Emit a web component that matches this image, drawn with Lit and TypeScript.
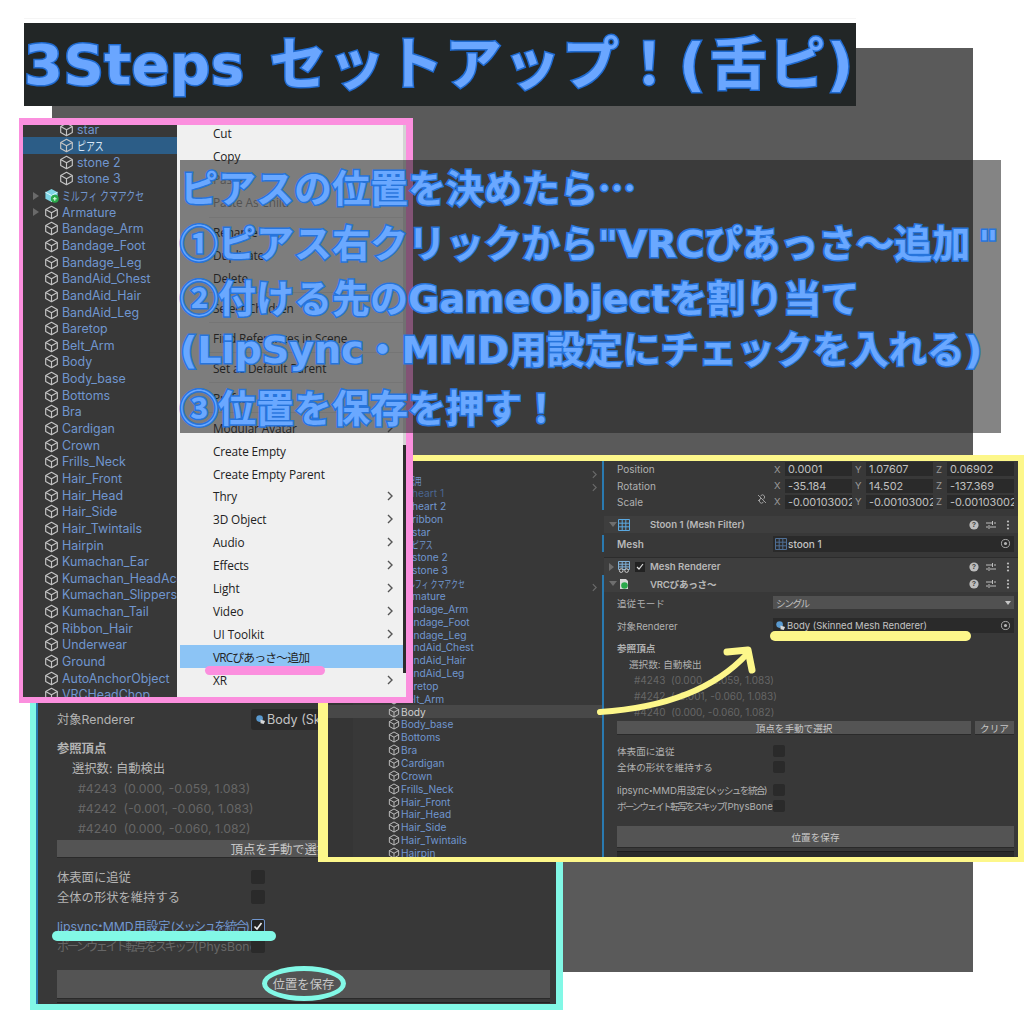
import { LitElement, html, css } from "lit";
import { customElement } from "lit/decorators.js";

type Row = { n: string; d?: number; kind?: string };

const common: Row[] = [
  { n: "Armature", kind: "fold" }, { n: "Bandage_Arm" }, { n: "Bandage_Foot" }, { n: "Bandage_Leg" },
  { n: "BandAid_Chest" }, { n: "BandAid_Hair" }, { n: "BandAid_Leg" }, { n: "Baretop" }, { n: "Belt_Arm" },
];
const afterBody: Row[] = [
  { n: "Body_base" }, { n: "Bottoms" }, { n: "Bra" }, { n: "Cardigan" }, { n: "Crown" }, { n: "Frills_Neck" },
  { n: "Hair_Front" }, { n: "Hair_Head" }, { n: "Hair_Side" }, { n: "Hair_Twintails" }, { n: "Hairpin" },
];
const pinkRows: Row[] = [
  { n: "star", d: 1 }, { n: "ピアス", d: 1, kind: "sel" }, { n: "stone 2", d: 1 }, { n: "stone 3", d: 1 },
  { n: "ミルフィ クマアクセ", kind: "prefab" },
  ...common, { n: "Body" }, ...afterBody,
  { n: "Kumachan_Ear" }, { n: "Kumachan_HeadAccessory" }, { n: "Kumachan_Slippers" }, { n: "Kumachan_Tail" },
  { n: "Ribbon_Hair" }, { n: "Underwear" }, { n: "Ground" }, { n: "AutoAnchorObject" }, { n: "VRCHeadChop" },
];
const yellowRows: Row[] = [
  { n: "確認用" }, { n: "heart 1", d: 1, kind: "dim" }, { n: "heart 2", d: 1 }, { n: "ribbon", d: 1 }, { n: "star", d: 1 },
  { n: "ピアス", d: 1 }, { n: "stone 2", d: 1 }, { n: "stone 3", d: 1 }, { n: "ミルフィ クマアクセ" },
  ...common, { n: "Body", kind: "hl" }, ...afterBody,
];
type Item = { t: string; k?: string };
const menu: Item[] = [
  { t: "Cut" }, { t: "Copy" }, { t: "Paste", k: "off" }, { t: "Paste As Child", k: "off" }, { t: "", k: "sep" },
  { t: "Rename" }, { t: "Duplicate" }, { t: "Delete" }, { t: "", k: "sep" },
  { t: "Select Children" }, { t: "", k: "sep" }, { t: "Find References in Scene" }, { t: "", k: "sep" },
  { t: "Set as Default Parent" }, { t: "", k: "sep" }, { t: "Prefab", k: "sub" }, { t: "", k: "sep" },
  { t: "Modular Avatar", k: "sub" }, { t: "Create Empty" }, { t: "Create Empty Parent" },
  { t: "Thry", k: "sub" }, { t: "3D Object", k: "sub" }, { t: "Audio", k: "sub" }, { t: "Effects", k: "sub" },
  { t: "Light", k: "sub" }, { t: "Video", k: "sub" }, { t: "UI Toolkit", k: "sub" },
  { t: "VRCぴあっさ～追加", k: "hl" }, { t: "XR", k: "sub" },
];

const cube = html`<svg class="ic" viewBox="0 0 16 16"><path d="M8 1.3 14.2 4.8v6.4L8 14.7 1.8 11.2V4.8zM1.8 4.8 8 8.3l6.2-3.5M8 8.3v6.4" fill="none" stroke="#c4c4c4" stroke-width="1.25" stroke-linejoin="round"/></svg>`;
const prefab = html`<svg class="ic" viewBox="0 0 16 16"><path d="M8 1 14.5 4.5v7L8 15 1.5 11.5v-7z" fill="#7fd6e6"/><path d="M1.5 4.5 8 8l6.5-3.5M8 8v7" fill="none" stroke="#e8fbff" stroke-width="1"/><circle cx="11.5" cy="11.5" r="4.2" fill="#2aa84a"/><path d="M9.5 11.5h4M11.5 9.5v4" stroke="#d6ffe0" stroke-width="1.2"/></svg>`;
const grid = (c = "#5aa8e0") => html`<svg class="cmp" viewBox="0 0 12 12"><path d="M.5.5h11v11H.5zM4.2.5v11M7.8.5v11M.5 4.2h11M.5 7.8h11" fill="none" stroke="${c}" stroke-width="1"/></svg>`;
const meshRendererIcon = html`<svg class="cmp" viewBox="0 0 12 12"><path d="M.5.5h11v8H.5zM4.2.5v8M7.8.5v8M.5 3.2h11M.5 5.9h11" fill="none" stroke="#7fb0d8" stroke-width="1"/><circle cx="3.2" cy="9.6" r="1.8" fill="#383838" stroke="#d0d0d0"/><circle cx="8.6" cy="9.6" r="1.8" fill="#383838" stroke="#d0d0d0"/></svg>`;
const headerIcons = html`<span class="hicons">
  <svg viewBox="0 0 12 12"><circle cx="6" cy="6" r="4.6" fill="#bdbdbd"/><text x="6" y="8.4" font-size="7" font-weight="700" text-anchor="middle" fill="#383838" font-family="Liberation Sans">?</text></svg>
  <svg viewBox="0 0 12 12"><path d="M1 4h6M9 4h2M1 8h2M5 8h6M7.5 2v4M4 6v4" stroke="#bdbdbd" stroke-width="1" fill="none"/></svg>
  <svg viewBox="0 0 12 12"><circle cx="6" cy="2.5" r="1.1" fill="#bdbdbd"/><circle cx="6" cy="6" r="1.1" fill="#bdbdbd"/><circle cx="6" cy="9.5" r="1.1" fill="#bdbdbd"/></svg>
</span>`;
const target = html`<svg class="tgt" viewBox="0 0 12 12"><circle cx="6" cy="6" r="4.4" fill="none" stroke="#b5b5b5" stroke-width="1"/><circle cx="6" cy="6" r="1.7" fill="#b5b5b5"/></svg>`;
const meshIc = html`<svg class="mini" viewBox="0 0 12 12"><circle cx="5" cy="5" r="3.6" fill="#5a9ad0"/><path d="M6 6l5 1.5-1.5 3.5-3.5-1z" fill="#d8d8d8"/></svg>`;
const lipsync = html`lipsync<span class="dot">・</span>MMD用設定<span class="nar">(メッシュを統合)</span>`;
const bone = html`<span class="nar2">ボーンウェイト転写をスキップ</span>(PhysBone`;

@customElement("app-root")
export class AppRoot extends LitElement {
  static styles = css`
    :host { display: block; width: 1024px; height: 1024px; background: #fff; position: relative; overflow: hidden;
      font-family: Inter, "Noto Sans CJK JP", sans-serif; }
    .win { position: absolute; box-sizing: border-box; overflow: hidden; }
    .gray { left: 52px; top: 48px; width: 921px; height: 924px; background: #5a5a5a; }
    .faint { position: absolute; left: 24px; top: 18px; width: 832px; height: 1px; background: #f5f5f5; }

    .title { left: 24px; top: 23px; width: 832px; height: 83px; background: #222626; display: flex; align-items: center;
      font: 700 57px/83px "DejaVu Sans", "Noto Sans CJK JP", sans-serif; color: #6aa6ff; letter-spacing: 1.5px;
      -webkit-text-stroke: 3px #1f6ad0; paint-order: stroke fill; white-space: pre; }
    .title .lat { font-size: 56px; letter-spacing: .5px; padding-right: 5px; }
    .title .par { letter-spacing: 5px; }
    .overlay { left: 180px; top: 160px; width: 821px; height: 273px; background: rgba(36,36,36,.56);
      display: flex; flex-direction: column;
      font: 700 38px/55px "DejaVu Sans", "Noto Sans CJK JP", sans-serif; color: #6aa8ff;
      -webkit-text-stroke: 3px #2674dc; paint-order: stroke fill; white-space: nowrap; overflow: visible; }
    .overlay div { height: 55px; flex: none; }
    .overlay div:first-child { margin-top: -2px; }
    .overlay .j { font-family: "Noto Sans CJK JP", sans-serif; }
    .overlay .q { margin-left: 8px; }

    .pink { left: 19px; top: 118px; width: 394px; height: 585px; border: solid #fb8fde; border-width: 7px 7px 6px 4px;
      background: #383838; display: flex; }
    .tree { width: 154px; flex: none; overflow: hidden; background: #383838; }
    .tree .rows { margin-top: -4.3px; }
    .row { height: 16.65px; display: flex; align-items: center; gap: 3px; padding-left: 21px; color: #7096cf;
      font-size: 12.4px; white-space: nowrap; position: relative; }
    .row.d1 { padding-left: 36px; }
    .row .ic { width: 15px; height: 15px; flex: none; }
    .row .cjk { display: inline-block; transform: scaleX(.72); transform-origin: left center; }
    .row.sel { background: #2c5d87; color: #d9e6f5; }
    .row.dim { color: #4a6590; }
    .row.hl { background: #484848; color: #cfcfcf; }
    .tri { position: absolute; width: 0; height: 0; left: 10px; border-left: 6px solid #6a6a6a;
      border-top: 4px solid transparent; border-bottom: 4px solid transparent; }
    .menu { flex: 1; background: #f0f0f0; overflow: hidden; position: relative; font: 11.8px "Open Sans", "Noto Sans CJK JP", sans-serif; letter-spacing: -.1px; color: #222; }
    .menu .list { margin-top: -3px; }
    .mi { height: 22.9px; display: flex; align-items: center; justify-content: space-between; padding: 0 13px 0 36px; }
    .mi.off { color: #8f8f8f; }
    .mi.hl { background: #8cc4f5; margin: 0 3px; padding: 0 10px 0 33px; letter-spacing: -.8px; }
    .mi svg { width: 6px; height: 10px; }
    .sep { height: 7.1px; display: flex; align-items: center; padding: 0 2px 0 32px; }
    .sep i { display: block; height: 1px; flex: 1; background: #dcdcdc; }
    .edge { position: absolute; right: 0; top: 320px; bottom: 24px; width: 3px; background: #2c2c2c; }
    .edge.l { top: 0; bottom: auto; height: 320px; background: #d4d4d4; }
    .mark { position: absolute; border-radius: 6px; }
    .mark.p { left: 205px; top: 666px; width: 120px; height: 9px; background: #fb8fde; }
    .mark.y { left: 770px; top: 631px; width: 201px; height: 10px; background: #fdf78a; }
    .mark.c { left: 52px; top: 931px; width: 224px; height: 10px; background: #82f8e6; }
    .ell { position: absolute; left: 262px; top: 966px; width: 84px; height: 35px; border: 5px solid #82f8e6; border-radius: 50%; box-sizing: border-box; }

    .yellow { left: 318px; top: 455px; width: 706px; height: 407px; border: solid #fdf78a; border-width: 6px 6px 5px 10px;
      background: #383838; display: flex; }
    .ytree { width: 274px; flex: none; overflow: hidden; padding-top: 13px; position: relative;
      background: linear-gradient(90deg, #353535 25px, #383838 25px); }
    .ytree .row { height: 12.85px; font-size: 10.2px; padding-left: 60px; gap: 1px; }
    .ytree .row.d1 { padding-left: 71px; }
    .ytree .row .ic { width: 12px; height: 12px; }
    .ytree .row .tri { display: none; }
    .ytree .row .cjk { transform: scaleX(.68); }
    .chev { position: absolute; left: 264px; width: 5px; height: 9px; }
    .insp { flex: 1; font-size: 9.6px; color: #b0b0b0; display: flex; flex-direction: column; white-space: nowrap; }
    .sect { border-left: 2px solid #2a7ab0; padding: 0 4px 0 13px; box-sizing: border-box; }
    .xf { height: 16.4px; display: flex; align-items: center; }
    .xf .lb { width: 157px; flex: none; position: relative; font-size: 10px; }
    .xf .lb svg { position: absolute; right: 6px; top: -3px; width: 12px; height: 12px; }
    .axes { display: grid; grid-template-columns: repeat(3, 78px); column-gap: 3px; }
    .ax { display: flex; align-items: center; gap: 3px; color: #9a9a9a; min-width: 0; }
    .ax b { font-weight: 400; width: 8px; flex: none; }
    .ax span { flex: 1; min-width: 0; overflow: hidden; background: #2a2a2a; color: #c0c0c0; height: 14px; line-height: 14px; padding-left: 3px; font-size: 10.9px; }
    .hd { height: 17px; background: #3e3e3e; display: flex; align-items: center; position: relative; margin-left: 2px;
      padding-left: 14px; padding-right: 4px; font-weight: 600; font-size: 9.6px; color: #b8b8b8; }
    .hd.topline { border-top: 1px solid #2c2c2c; }
    .hd.in { margin: 0 -4px 0 -13px; }
    .hd .ar { position: absolute; left: 5px; width: 0; height: 0; border-left: 4px solid transparent; border-right: 4px solid transparent; border-top: 5px solid #6e6e6e; }
    .hd .ar.r { border: 0; border-left: 5px solid #6e6e6e; border-top: 4px solid transparent; border-bottom: 4px solid transparent; }
    .cmp { width: 12px; height: 12px; flex: none; }
    .hd .tx { margin-left: 20px; flex: 1; }
    .hd .tx.nj { letter-spacing: -.25px; }
    .hd .cbx { width: 10px; height: 10px; background: #222; margin-left: 5px; margin-right: -15px; flex: none; display: grid; place-items: center; }
    .hd .cbx svg { width: 8px; height: 8px; }
    .hicons { display: flex; gap: 5px; }
    .hicons svg { width: 12px; height: 12px; }
    .mrow { height: 17px; display: flex; align-items: center; font-weight: 600; color: #b8b8b8; font-size: 10px; margin-top: 2px; }
    .mrow .lb, .lbl { width: 156px; flex: none; }
    .fld { flex: 1; height: 16px; background: #2a2a2a; display: flex; align-items: center; gap: 1px; padding: 0 3px 0 2px; color: #c4c4c4; font-weight: 400; font-size: 9.5px; overflow: hidden; white-space: nowrap; min-width: 0; }
    .fld .grow { flex: 1; overflow: hidden; }
    .fld .wgt { font-weight: 500; font-size: 10px; }
    .tgt { width: 11px; height: 11px; flex: none; }
    .mini { width: 11px; height: 11px; flex: none; }
    .line { display: flex; align-items: center; }
    .dd { flex: 1; height: 13px; background: #515151; color: #c0c0c0; display: flex; align-items: center; justify-content: space-between; padding: 0 3px; letter-spacing: -1.4px; }
    .dd i { width: 0; height: 0; border-left: 3px solid transparent; border-right: 3px solid transparent; border-top: 4px solid #c8c8c8; }
    .btnrow { display: flex; gap: 4px; }
    .btn { background: #545454; color: #c8c8c8; display: grid; place-items: center; border-bottom: 1px solid #2a2a2a; box-sizing: border-box; }
    .btn.grow { flex: 1; }
    .btn.w39 { width: 39px; }
    .btn.cbtn { width: 446px; }
    .cb { width: 12px; height: 12px; border-radius: 2px; background: #2a2a2a; flex: none; }
    .bold { font-weight: 700; }
    .dimt { color: #666; }
    .vrc { flex: 1; display: flex; flex-direction: column; }
    .rest { flex: 1; background: #2a2a2a; margin-top: 3px; border-top: 1px solid #1e1e1e; }
    .nar { letter-spacing: -.16em; }
    .nar2 { letter-spacing: -.2em; }
    .dot { margin: 0 -.32em; }
    .h13 { height: 13px; } .h14 { height: 14px; } .h15 { height: 15px; } .h16 { height: 16px; }
    .fld.h15 { height: 15px; }
    .h18 { height: 18px; } .h22 { height: 22px; } .h29 { height: 29px; }
    .mt1 { margin-top: 1px; } .mt2 { margin-top: 2px; } .mt4 { margin-top: 4px; } .mt5 { margin-top: 5px; }
    .mt6 { margin-top: 6px; } .mt7 { margin-top: 7px; } .mt8 { margin-top: 8px; } .mt9 { margin-top: 9px; }
    .mt10 { margin-top: 10px; } .mt12 { margin-top: 12px; } .mt14 { margin-top: 14px; }
    .pl12 { padding-left: 12px; } .pl15 { padding-left: 15px; } .pl17 { padding-left: 17px; font-size: 10px; } .pl21 { padding-left: 21px; }
    .clip { overflow: hidden; }

    .cyan { left: 30px; top: 700px; width: 533px; height: 310px; border: solid #82f8e6; border-width: 0 7px 6px 6px;
      background: #383838; }
    .cin { height: 100%; border-left: 2px solid #2a7ab0; padding: 9px 6px 0 19px; box-sizing: border-box; display: flex; flex-direction: column;
      color: #b4b4b4; font-size: 12.3px; white-space: nowrap; }
    .cin .line { height: 20px; }
    .cin .lbl { width: 194px; }
    .cin .fld { height: 21px; font-size: 12.6px; border-radius: 3px; gap: 1px; padding-left: 4px; }
    .cin .cb { width: 14px; height: 14px; }
    .cin .blue { color: #7096cf; }
    .cin .cb.on { background: #222; border: 1px solid #7096cf; box-sizing: border-box; display: grid; place-items: center; }
    .cb.on svg { width: 10px; height: 10px; }
    .sepline { height: 1px; background: #222; margin-top: 3px; }
    .arrow { position: absolute; left: 0; top: 0; width: 1024px; height: 1024px; pointer-events: none; }
  `;

  rows(list: Row[]) {
    return list.map((r) => html`<div class="row ${r.d ? "d1" : ""} ${r.kind ?? ""}">
      ${r.kind === "fold" || r.kind === "prefab" ? html`<span class="tri"></span>` : ""}
      ${r.kind === "prefab" ? prefab : cube}<span class="${/[^\x00-\x7f]/.test(r.n) ? "cjk" : ""}">${r.n}</span></div>`);
  }
  chev(c: string, cls = "") {
    return html`<svg class="${cls}" viewBox="0 0 6 10"><path d="M1 1l4 4-4 4" fill="none" stroke="${c}" stroke-width="1.4"/></svg>`;
  }
  xf(label: string, v: string[], link = false) {
    return html`<div class="xf"><span class="lb">${label}${link ? html`<svg viewBox="0 0 12 12"><path d="M2 8l3-3M4 3.5l1-1a2 2 0 0 1 3 3l-1 1M8 8.5l-1 1a2 2 0 0 1-3-3l1-1M2 2l8 8" stroke="#9c9c9c" fill="none"/></svg>` : ""}</span>
      <div class="axes">${["X", "Y", "Z"].map((a, i) => html`<div class="ax"><b>${a}</b><span>${v[i]}</span></div>`)}</div></div>`;
  }

  render() {
    return html`
      <div class="faint"></div>
      <div class="win gray"></div>

      <div class="win cyan"><div class="cin">
        <div class="line"><span class="lbl">対象Renderer</span><span class="fld">${meshIc}Body (Skinned Mesh Renderer)</span></div>
        <div class="line bold mt9">参照頂点</div>
        <div class="line pl15">選択数: 自動検出</div>
        <div class="line dimt pl21">#4243&nbsp;&nbsp;(0.000, -0.059, 1.083)</div>
        <div class="line dimt pl21">#4242&nbsp;&nbsp;(-0.001, -0.060, 1.083)</div>
        <div class="line dimt pl21">#4240&nbsp;&nbsp;(0.000, -0.060, 1.082)</div>
        <div class="btn cbtn h18 mt2">頂点を手動で選択</div>
        <div class="line mt9"><span class="lbl">体表面に追従</span><span class="cb"></span></div>
        <div class="line"><span class="lbl">全体の形状を維持する</span><span class="cb"></span></div>
        <div class="line blue mt9"><span class="lbl">${lipsync}</span><span class="cb on"><svg viewBox="0 0 10 10"><path d="M1.5 5.5 4 8l4.5-6" fill="none" stroke="#eee" stroke-width="1.6"/></svg></span></div>
        <div class="line dimt"><span class="lbl">${bone}</span><span class="cb"></span></div>
        <div class="btn h29 mt14">位置を保存</div>
        <div class="sepline"></div>
      </div></div>
      <div class="mark c"></div>
      <div class="ell"></div>

      <div class="win yellow">
        <div class="ytree">
          ${[9, 22, 122].map((t) => html`<span style="position:absolute;top:${t}px">${this.chev("#6a6a6a", "chev")}</span>`)}
          ${this.rows(yellowRows)}
        </div>
        <div class="insp">
          <div class="sect">
            ${this.xf("Position", ["0.0001", "1.07607", "0.06902"])}
            ${this.xf("Rotation", ["-35.184", "14.502", "-137.369"])}
            ${this.xf("Scale", ["-0.00103002", "-0.00103002", "-0.00103002"], true)}
          </div>
          <div class="hd mt6"><span class="ar"></span>${grid()}<span class="tx">Stoon 1 (Mesh Filter)</span>${headerIcons}</div>
          <div class="sect mrow"><span class="lb">Mesh</span><span class="fld">${grid("#4f6f96")}<span class="grow wgt">stoon 1</span>${target}</span></div>
          <div class="hd mt5 topline"><span class="ar r"></span>${meshRendererIcon}<span class="cbx"><svg viewBox="0 0 8 8"><path d="M1 4l2 2 4-5" fill="none" stroke="#ddd" stroke-width="1.2"/></svg></span><span class="tx">Mesh Renderer</span>${headerIcons}</div>
          <div class="sect vrc">
            <div class="hd in"><span class="ar"></span><svg class="cmp" viewBox="0 0 12 12"><path d="M2 1h6l2 2v8H2z" fill="#d8d8d8"/><circle cx="6.5" cy="7.5" r="3.3" fill="#2aa84a"/></svg><span class="tx nj">VRCぴあっさ～</span>${headerIcons}</div>
            <div class="line h13 mt4"><span class="lbl">追従モード</span><span class="dd">シングル<i></i></span></div>
            <div class="line h15 mt9"><span class="lbl">対象Renderer</span><span class="fld h15">${meshIc}<span class="grow">Body (Skinned Mesh Renderer)</span>${target}</span></div>
            <div class="line bold h16 mt7">参照頂点</div>
            <div class="line h16 pl12">選択数: 自動検出</div>
            <div class="line dimt h16 pl17">#4243&nbsp;&nbsp;(0.000, -0.059, 1.083)</div>
            <div class="line dimt h16 pl17">#4242&nbsp;&nbsp;(-0.001, -0.060, 1.083)</div>
            <div class="line dimt h16 pl17">#4240&nbsp;&nbsp;(0.000, -0.060, 1.082)</div>
            <div class="btnrow h14 mt1"><div class="btn grow">頂点を手動で選択</div><div class="btn w39">クリア</div></div>
            <div class="line h16 mt8"><span class="lbl">体表面に追従</span><span class="cb"></span></div>
            <div class="line h16"><span class="lbl">全体の形状を維持する</span><span class="cb"></span></div>
            <div class="line h16 mt7"><span class="lbl">${lipsync}</span><span class="cb"></span></div>
            <div class="line h16"><span class="lbl clip">${bone}</span><span class="cb"></span></div>
            <div class="btn h22 mt12">位置を保存</div>
            <div class="rest"></div>
          </div>
        </div>
      </div>

      <div class="win pink">
        <div class="tree"><div class="rows">${this.rows(pinkRows)}</div></div>
        <div class="menu">
          <div class="list">
            ${menu.map((m) => m.k === "sep"
              ? html`<div class="sep"><i></i></div>`
              : html`<div class="mi ${m.k ?? ""}"><span>${m.t}</span>${m.k === "sub" ? this.chev("#555") : ""}</div>`)}
          </div>
          <div class="edge l"></div><div class="edge"></div>
        </div>
      </div>
      <div class="mark p"></div>
      <div class="mark y"></div>

      <svg class="arrow" viewBox="0 0 1024 1024">
        <path d="M600 712 C 660 708 712 692 747 654" fill="none" stroke="#fdf78a" stroke-width="6" stroke-linecap="round"/>
        <path d="M727 652 L748 650 L752 670" fill="none" stroke="#fdf78a" stroke-width="7" stroke-linecap="round" stroke-linejoin="round"/>
      </svg>

      <div class="win overlay">
        <div>ピアスの位置を決めたら<span class="j">…</span></div>
        <div><span class="j">①</span>ピアス右クリックから"VRCぴあっさ～追加<span class="q">"</span></div>
        <div><span class="j">②</span>付ける先のGameObjectを割り当て</div>
        <div>(LipSync・MMD用設定にチェックを入れる)</div>
        <div><span class="j">③</span>位置を保存を押す！</div>
      </div>
      <div class="win title"><span class="lat">3Steps </span>セットアップ！<span class="par">(</span>舌ピ)</div>
    `;
  }
}
